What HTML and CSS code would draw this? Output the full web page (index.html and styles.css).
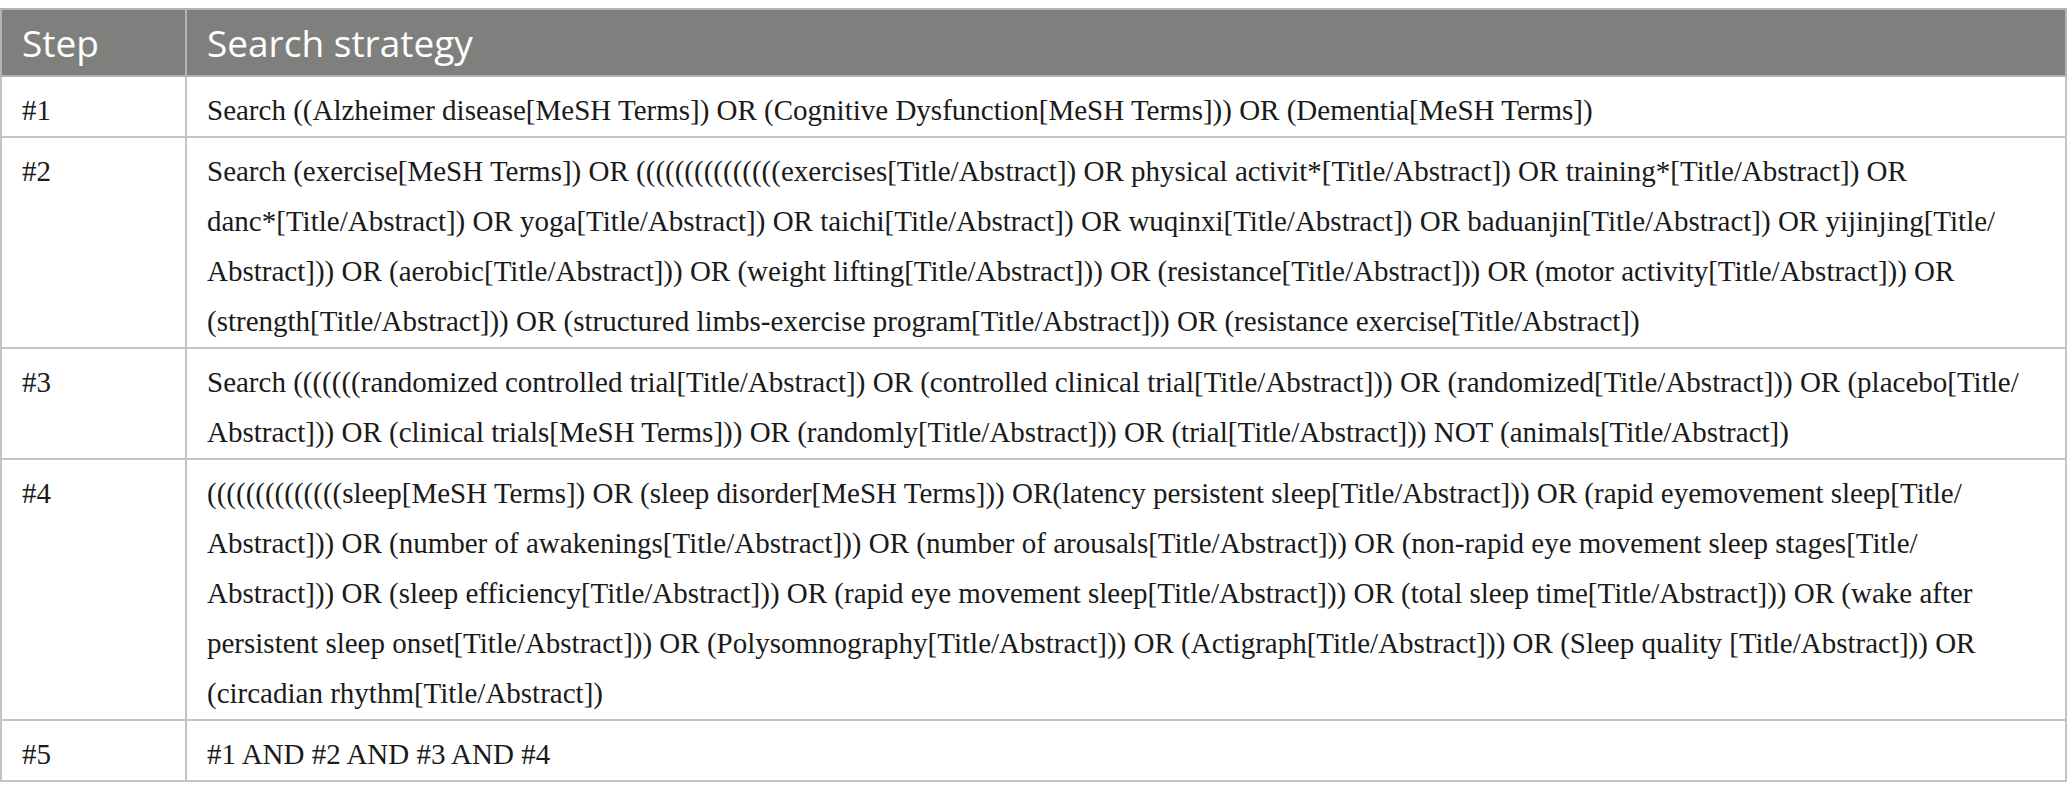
FILE: index.html
```html
<!DOCTYPE html>
<html>
<head>
<meta charset="utf-8">
<link rel="stylesheet" href="styles.css">
</head>
<body>
<table class="strategy">
  <thead>
    <tr><th class="step">Step</th><th>Search strategy</th></tr>
  </thead>
  <tbody>
    <tr><td class="step">#1</td><td>Search ((Alzheimer disease[MeSH Terms]) OR (Cognitive Dysfunction[MeSH Terms])) OR (Dementia[MeSH Terms])</td></tr>
    <tr><td class="step">#2</td><td>Search (exercise[MeSH Terms]) OR (((((((((((((((exercises[Title/Abstract]) OR physical activit*[Title/Abstract]) OR training*[Title/Abstract]) OR<br>danc*[Title/Abstract]) OR yoga[Title/Abstract]) OR taichi[Title/Abstract]) OR wuqinxi[Title/Abstract]) OR baduanjin[Title/Abstract]) OR yijinjing[Title/<br>Abstract])) OR (aerobic[Title/Abstract])) OR (weight lifting[Title/Abstract])) OR (resistance[Title/Abstract])) OR (motor activity[Title/Abstract])) OR<br>(strength[Title/Abstract])) OR (structured limbs-exercise program[Title/Abstract])) OR (resistance exercise[Title/Abstract])</td></tr>
    <tr><td class="step">#3</td><td>Search (((((((randomized controlled trial[Title/Abstract]) OR (controlled clinical trial[Title/Abstract])) OR (randomized[Title/Abstract])) OR (placebo[Title/<br>Abstract])) OR (clinical trials[MeSH Terms])) OR (randomly[Title/Abstract])) OR (trial[Title/Abstract])) NOT (animals[Title/Abstract])</td></tr>
    <tr><td class="step">#4</td><td>((((((((((((((sleep[MeSH Terms]) OR (sleep disorder[MeSH Terms])) OR(latency persistent sleep[Title/Abstract])) OR (rapid eyemovement sleep[Title/<br>Abstract])) OR (number of awakenings[Title/Abstract])) OR (number of arousals[Title/Abstract])) OR (non-rapid eye movement sleep stages[Title/<br>Abstract])) OR (sleep efficiency[Title/Abstract])) OR (rapid eye movement sleep[Title/Abstract])) OR (total sleep time[Title/Abstract])) OR (wake after<br>persistent sleep onset[Title/Abstract])) OR (Polysomnography[Title/Abstract])) OR (Actigraph[Title/Abstract])) OR (Sleep quality [Title/Abstract])) OR<br>(circadian rhythm[Title/Abstract])</td></tr>
    <tr><td class="step">#5</td><td>#1 AND #2 AND #3 AND #4</td></tr>
  </tbody>
</table>
</body>
</html>
```
FILE: styles.css
```css
html, body {
  margin: 0;
  padding: 0;
  background: #ffffff;
}
body {
  padding-top: 8px;
}
.strategy {
  width: 2067px;
  border-collapse: collapse;
  font-family: "Liberation Serif", "Times New Roman", serif;
  color: #1a1a1a;
}
.strategy th,
.strategy td {
  border: 2px solid #c4c4c4;
  text-align: left;
  vertical-align: top;
  white-space: nowrap;
}
.strategy th {
  background: #7f807e;
  color: #ffffff;
  font-family: "Open Sans", "Noto Sans", sans-serif;
  font-weight: 400;
  font-size: 37px;
  height: 65px;
  padding: 0 20px;
  vertical-align: middle;
  border-color: #b4b4b4;
}
.strategy td {
  font-size: 29px;
  line-height: 50px;
  padding: 8px 20px 1px;
}
.strategy .step {
  width: 143px;
}
```
